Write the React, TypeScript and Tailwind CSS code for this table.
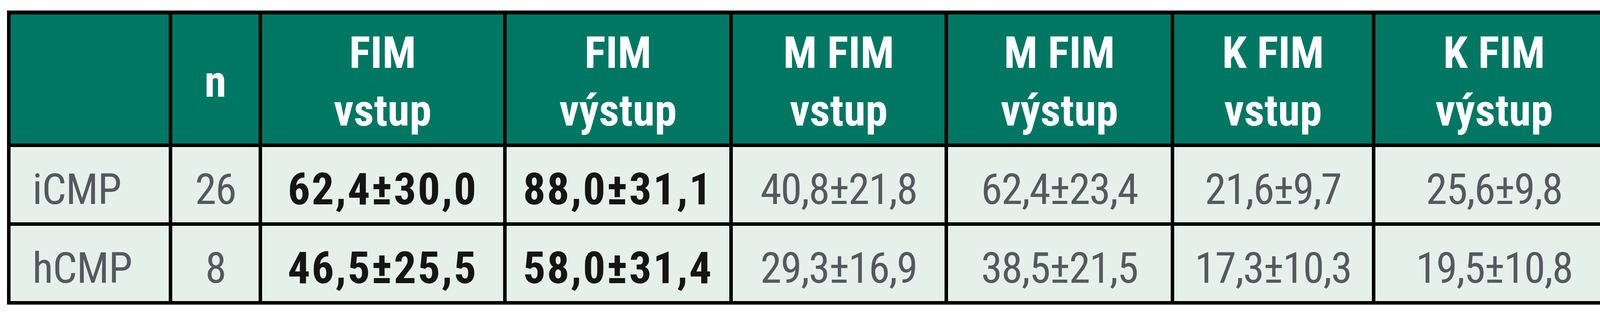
const headers: string[][] = [
  [],
  ['n'],
  ['FIM', 'vstup'],
  ['FIM', 'výstup'],
  ['M FIM', 'vstup'],
  ['M FIM', 'výstup'],
  ['K FIM', 'vstup'],
  ['K FIM', 'výstup'],
];

const rows: string[][] = [
  ['iCMP', '26', '62,4±30,0', '88,0±31,1', '40,8±21,8', '62,4±23,4', '21,6±9,7', '25,6±9,8'],
  ['hCMP', '8', '46,5±25,5', '58,0±31,4', '29,3±16,9', '38,5±21,5', '17,3±10,3', '19,5±10,8'],
];

export default function App() {
  return (
    <div className="w-[4156px] h-[800px] bg-white pl-[18px] pt-[27px] font-['Roboto_Condensed','Liberation_Sans',sans-serif]">
      <div className="grid w-[4120px] grid-cols-[405px_221px_617px_570px_542px_570px_506px_608px] grid-rows-[331px_193px_193px] gap-[9px] bg-black p-[9px] pt-[10px]">
        {headers.map((h, i) => (
          <div
            key={`h${i}`}
            className="flex flex-col items-center justify-center bg-[#007763] pt-[12px] text-center text-[114px] font-bold leading-[148px] text-white"
          >
            {h.map((line) => (
              <span key={line}>{line}</span>
            ))}
          </div>
        ))}
        {rows.map((r, ri) =>
          r.map((cell, ci) => {
            if (ci === 0) {
              return (
                <div
                  key={`r${ri}c${ci}`}
                  className="flex items-center bg-[#e6f0eb] pl-[56px] pt-[24px] text-[110px] leading-[193px] tracking-[-0.01em] text-[#55595e]"
                >
                  {cell}
                </div>
              );
            }
            if (ci === 2 || ci === 3) {
              return (
                <div
                  key={`r${ri}c${ci}`}
                  className="flex items-center justify-center bg-[#e6f0eb] pt-[24px] text-[114px] font-bold leading-[193px] tracking-[0.03em] text-[#151515]"
                >
                  {cell}
                </div>
              );
            }
            return (
              <div
                key={`r${ri}c${ci}`}
                className="flex items-center justify-center bg-[#e6f0eb] pt-[24px] text-[110px] leading-[193px] tracking-[-0.02em] text-[#55595e]"
              >
                {cell}
              </div>
            );
          })
        )}
      </div>
    </div>
  );
}
